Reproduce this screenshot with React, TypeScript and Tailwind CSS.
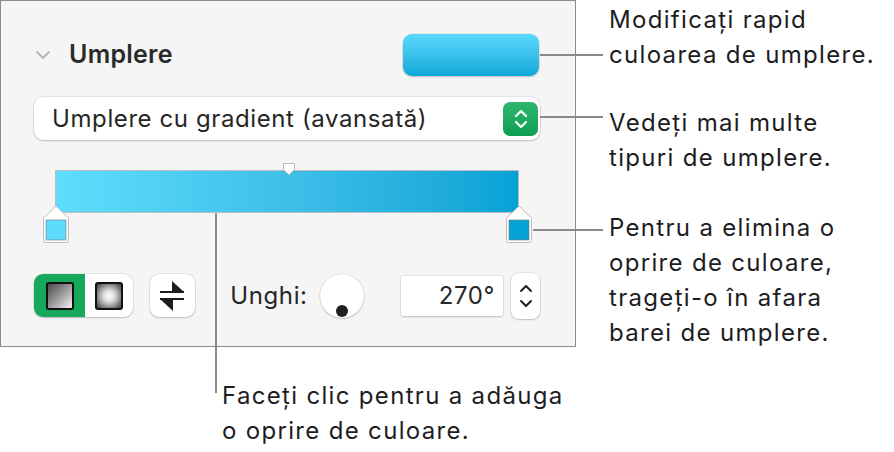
import * as React from 'react';

const ctl = 'bg-white shadow-[0_0_0_0.5px_rgba(0,0,0,0.12),0_1px_2px_rgba(0,0,0,0.18)]';

function ColorStop({ color, className }: { color: string; className: string }) {
  return (
    <svg className={className} width="28" height="39" viewBox="0 0 28 39">
      <path
        d="M1.5 13 L14 1 L26.5 13 V35.5 a2 2 0 0 1 -2 2 H3.5 a2 2 0 0 1 -2 -2 Z"
        fill="#fff"
        stroke="#bdbdbd"
      />
      <rect x="4" y="15" width="20" height="20" fill={color} stroke="#7a7a7a" strokeWidth="0.6" />
    </svg>
  );
}

function SwapIcon() {
  return (
    <svg width="24" height="30" viewBox="0 0 24 30">
      <rect x="0" y="10" width="24" height="2" fill="#1c1c1c" />
      <path d="M12 0 L12 11 L24 11 Z" fill="#1c1c1c" />
      <rect x="0" y="17" width="24" height="2" fill="#1c1c1c" />
      <path d="M0 18 L13 18 L13 30 Z" fill="#1c1c1c" />
    </svg>
  );
}

export default function App() {
  return (
    <div className="relative w-[894px] h-[452px] bg-white font-['Inter',sans-serif] text-[#1d1d1f]">
      <div className="flex">
        <div className="w-[576px] shrink-0">
          {/* inspector panel */}
          <div className="h-[347px] border border-[#8c8c8c] bg-[#f5f5f5] pl-[33px] pr-[35px] pt-[33px]">
            <div className="flex h-[42px] items-center">
              <svg className="ml-px" width="16" height="10" viewBox="0 0 16 10">
                <path d="M1.5 1.5 L8 8 L14.5 1.5" fill="none" stroke="#b3b3b3" strokeWidth="1.8" />
              </svg>
              <span className="ml-[18px] text-[25px] font-semibold tracking-[0.01em] text-[#2a2a2a]">Umplere</span>
              <div className="ml-auto mr-px h-[42px] w-[136px] rounded-[9px] bg-gradient-to-b from-[#58d9fc] to-[#08a8db] shadow-[0_0_0_0.5px_rgba(0,0,0,0.1),0_1px_2px_rgba(0,0,0,0.2)]" />
            </div>

            <div className={`mt-[21px] flex h-[43px] items-center rounded-[9px] pl-[18px] pr-[2px] ${ctl}`}>
              <span className="text-[24px] tracking-[0.025em] text-[#262626]">Umplere cu gradient (avansată)</span>
              <div className="ml-auto flex h-[34px] w-[35px] items-center justify-center rounded-[7px] bg-gradient-to-b from-[#2db66e] to-[#0e9e51]">
                <svg width="16" height="24" viewBox="0 0 16 24">
                  <path d="M3 9 L8 4 L13 9 M3 15 L8 20 L13 15" fill="none" stroke="#fff" strokeWidth="2.2" strokeLinecap="round" strokeLinejoin="round" />
                </svg>
              </div>
            </div>

            {/* gradient bar */}
            <div className="relative mx-[21px] mt-[30px] h-[43px] border border-[#bdbdbd] bg-gradient-to-r from-[#60ddfd] to-[#03a2d5]">
              <svg className="absolute left-[226px] top-[-9px]" width="14" height="15" viewBox="0 0 14 15">
                <path d="M1.5 1.5 H12.5 V7.5 L7 13 L1.5 7.5 Z" fill="#fff" stroke="#b8b8b8" />
              </svg>
              <ColorStop color="#5ddcfd" className="absolute left-[-14px] top-[34px]" />
              <ColorStop color="#05a3d6" className="absolute right-[-15px] top-[34px]" />
            </div>

            {/* controls row */}
            <div className="mt-[61px] flex h-[43px] items-center">
              <div className="flex h-[43px] w-[99px] overflow-hidden rounded-[9px] bg-white shadow-[0_0_0_0.5px_rgba(0,0,0,0.12),0_1px_2px_rgba(0,0,0,0.18)]">
                <div className="flex w-[51px] items-center justify-center bg-[#17a85e]">
                  <div className="h-[28px] w-[28px] rounded-[3px] border-2 border-[#111] bg-gradient-to-br from-[#4a4a4a] to-[#f4f4f4]" />
                </div>
                <div className="flex flex-1 items-center justify-center">
                  <div className="h-[28px] w-[28px] rounded-[3px] border-2 border-[#111] bg-[radial-gradient(circle,#ffffff_0%,#d8d8d8_35%,#3a3a3a_100%)]" />
                </div>
              </div>
              <div className={`ml-[17px] flex h-[43px] w-[46px] items-center justify-center rounded-[9px] ${ctl}`}>
                <SwapIcon />
              </div>
              <span className="ml-[35px] w-[90px] text-[24px] tracking-[0.025em] text-[#262626]">Unghi:</span>
              <div className={`relative h-[44px] w-[44px] rounded-full ${ctl}`}>
                <div className="absolute left-[16px] top-[31px] h-[12px] w-[12px] rounded-full bg-[#1f1f1f]" />
              </div>
              <div className={`ml-[37px] flex h-[40px] w-[103px] items-center justify-end pr-[8px] text-[24px] tracking-[0.025em] text-[#262626] ${ctl} rounded-[2px]`}>
                270°
              </div>
              <div className={`ml-[8px] flex h-[46px] w-[29px] flex-col items-center justify-center gap-[6px] rounded-[8px] ${ctl}`}>
                <svg width="14" height="9" viewBox="0 0 14 9">
                  <path d="M2 7 L7 2 L12 7" fill="none" stroke="#1f1f1f" strokeWidth="2" strokeLinecap="round" strokeLinejoin="round" />
                </svg>
                <svg width="14" height="9" viewBox="0 0 14 9">
                  <path d="M2 2 L7 7 L12 2" fill="none" stroke="#1f1f1f" strokeWidth="2" strokeLinecap="round" strokeLinejoin="round" />
                </svg>
              </div>
            </div>
          </div>

          <p className="mt-[31px] pl-[222px] text-[24px] leading-[35px] tracking-[0.055em]">
            Faceți clic pentru a adăuga
            <br />o oprire de culoare.
          </p>
        </div>

        {/* callouts */}
        <div className="pl-[33px] text-[24px] leading-[35px] tracking-[0.055em]">
          <p className="mt-[2px]">
            Modificați rapid
            <br />
            culoarea de umplere.
          </p>
          <p className="mt-[33px]">
            Vedeți mai multe
            <br />
            tipuri de umplere.
          </p>
          <p className="mt-[35px]">
            Pentru a elimina o
            <br />
            oprire de culoare,
            <br />
            trageți-o în afara
            <br />
            barei de umplere.
          </p>
        </div>
      </div>

      {/* leader lines */}
      <div className="absolute left-[540px] top-[54px] h-[2px] w-[63px] bg-[#8a8a8a]" />
      <div className="absolute left-[540px] top-[116px] h-[2px] w-[63px] bg-[#8a8a8a]" />
      <div className="absolute left-[533px] top-[229px] h-[2px] w-[70px] bg-[#8a8a8a]" />
      <div className="absolute left-[215px] top-[213px] h-[180px] w-[2px] bg-[#8a8a8a]" />
    </div>
  );
}
